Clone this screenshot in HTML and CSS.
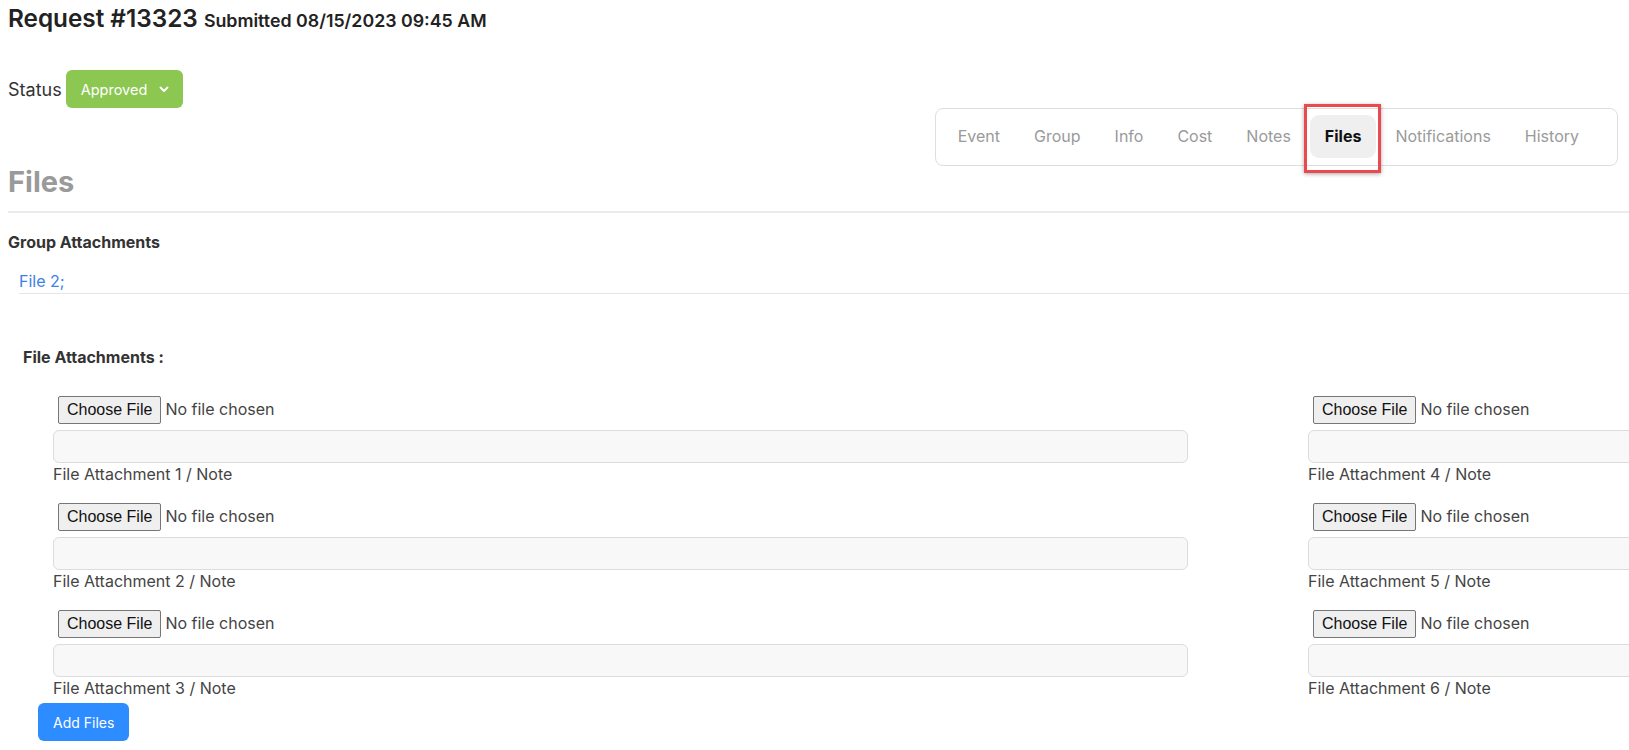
FILE: index.html
```html
<!DOCTYPE html>
<html>
<head>
  <title>Request #13323</title>
  <link rel="stylesheet" href="styles.css">
</head>
<body>
  <h1 class="req-title">Request #13323 <small>Submitted 08/15/2023 09:45 AM</small></h1>

  <div class="status-row">
    <span>Status</span>
    <button type="button" class="status-btn">Approved
      <svg width="12" height="12" viewBox="0 0 12 12"><path d="M2.5 4.5 6 8 9.5 4.5" fill="none" stroke="#fff" stroke-width="1.9" stroke-linecap="round" stroke-linejoin="round"/></svg>
    </button>
  </div>

  <div class="tabs-row">
    <ul class="tabs">
      <li>Event</li>
      <li>Group</li>
      <li>Info</li>
      <li>Cost</li>
      <li>Notes</li>
      <li class="active">Files</li>
      <li>Notifications</li>
      <li>History</li>
    </ul>
  </div>

  <h2 class="section-title">Files</h2>
  <hr class="divider">

  <h4 class="sub-title">Group Attachments</h4>
  <ul class="group-files">
    <li><a href="#">File 2;</a></li>
  </ul>

  <form class="upload">
    <h4 class="sub-title attach-title">File Attachments :</h4>
    <div class="attach-grid">
      <div class="attach-col">
        <div class="attach">
          <input type="file" class="file-in">
          <input type="text" class="note-in">
          <label>File Attachment 1 / Note</label>
        </div>
        <div class="attach">
          <input type="file" class="file-in">
          <input type="text" class="note-in">
          <label>File Attachment 2 / Note</label>
        </div>
        <div class="attach">
          <input type="file" class="file-in">
          <input type="text" class="note-in">
          <label>File Attachment 3 / Note</label>
        </div>
      </div>
      <div class="attach-col">
        <div class="attach">
          <input type="file" class="file-in">
          <input type="text" class="note-in">
          <label>File Attachment 4 / Note</label>
        </div>
        <div class="attach">
          <input type="file" class="file-in">
          <input type="text" class="note-in">
          <label>File Attachment 5 / Note</label>
        </div>
        <div class="attach">
          <input type="file" class="file-in">
          <input type="text" class="note-in">
          <label>File Attachment 6 / Note</label>
        </div>
      </div>
    </div>
    <button type="button" class="add-btn">Add Files</button>
  </form>
</body>
</html>
```

FILE: styles.css
```css
html, body {
  overflow: hidden;
}

body {
  margin: 0;
  padding: 0 8px;
  font-family: Inter, "Noto Sans", sans-serif;
  color: #333;
  background: #fff;
}

.req-title {
  margin: 0;
  font-size: 24.3px;
  line-height: 36px;
  font-weight: 600;
  color: #222;
}

.req-title small {
  font-size: 17.8px;
  font-weight: 600;
}

.status-row {
  display: flex;
  align-items: center;
  gap: 4px;
  margin-top: 31px;
  font-size: 18px;
  color: #333;
}

.status-btn {
  display: flex;
  align-items: center;
  gap: 11px;
  height: 38px;
  padding: 0 13px 0 15px;
  border: 0;
  border-radius: 6px;
  background: #8bc751;
  color: #fff;
  font-family: Inter, sans-serif;
  font-size: 14.5px;
}

.tabs-row {
  display: flex;
  width: 1610px;
  justify-content: flex-end;
}

.tabs {
  display: flex;
  gap: 4px;
  margin: 0;
  padding: 6px 23px 7px 7px;
  list-style: none;
  border: 1px solid #dedede;
  border-radius: 8px;
}

.tabs li {
  position: relative;
  padding: 0 15px;
  line-height: 43px;
  font-size: 16px;
  color: #9a9a9a;
  border-radius: 9px;
}

.tabs li.active {
  background: #efefef;
  color: #111;
  font-weight: 700;
}

/* highlight box round the active tab */
.tabs li.active:after {
  content: "";
  position: absolute;
  top: -11px;
  bottom: -15px;
  left: -6px;
  right: -5px;
  border: 3px solid #e84a4f;
  box-shadow: 0 1px 4px rgba(0,0,0,.35);
}

.section-title {
  margin: 0;
  font-size: 29px;
  line-height: 32px;
  font-weight: 700;
  color: #9a9a9a;
}

.divider {
  margin: 13px 0 0;
  border: 0;
  border-top: 2px solid #ebebeb;
  width: 1700px;
}

.sub-title {
  margin: 19px 0 0;
  font-size: 16px;
  line-height: 20px;
  font-weight: 700;
  color: #333;
}

.group-files {
  margin: 12px 0 0 11px;
  padding: 0;
  list-style: none;
  width: 1700px;
}

.group-files li {
  padding: 6px 0 1px;
  border-bottom: 1px solid #e6e6e6;
}

.group-files a {
  font-size: 16px;
  line-height: 22px;
  color: #3f80e6;
  text-decoration: none;
}

.upload {
  padding-left: 15px;
}

.attach-title {
  margin-top: 53px;
}

.attach-grid {
  display: grid;
  grid-template-columns: 1135px 1135px;
  column-gap: 120px;
  margin: 29px 0 0 30px;
}

.attach {
  display: flex;
  flex-direction: column;
  align-items: flex-start;
  margin-bottom: 18px;
}

.attach-col .attach:last-child {
  margin-bottom: 4px;
}

.file-in {
  margin-left: 5px;
  height: 28px;
  font-family: Inter, sans-serif;
  font-size: 16px;
  color: #444;
}

.file-in::file-selector-button {
  height: 28px;
  margin-right: 4px;
  padding: 0 8px;
  font-family: "Liberation Sans", Arial, sans-serif;
  font-size: 16px;
  color: #111;
  background: #efefef;
  border: 1px solid #767676;
  border-radius: 2px;
}

.note-in {
  box-sizing: border-box;
  width: 100%;
  height: 33px;
  margin-top: 6px;
  border: 1px solid #dcdcdc;
  border-radius: 6px;
  background: #f8f8f8;
}

.attach label {
  font-size: 16px;
  line-height: 22px;
  color: #444;
}

.add-btn {
  height: 38px;
  margin-left: 15px;
  padding: 0 15px;
  border: 0;
  border-radius: 6px;
  background: #2d8cff;
  color: #fff;
  font-family: Inter, sans-serif;
  font-size: 14px;
}
```
